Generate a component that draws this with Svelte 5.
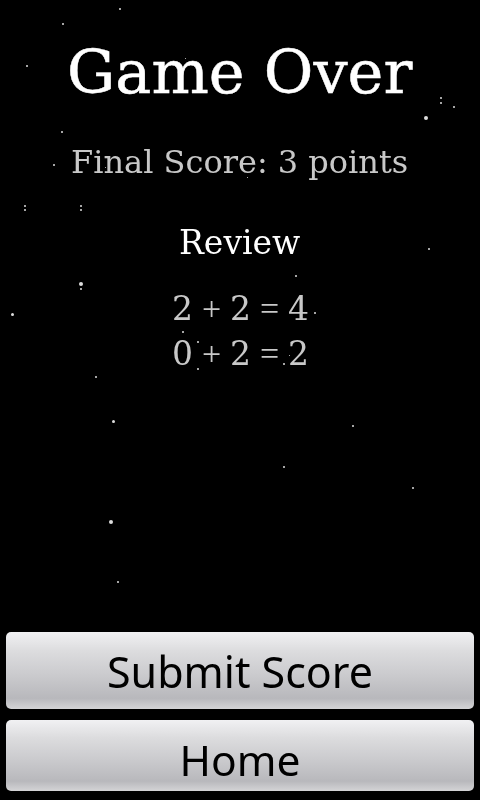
<script lang="ts">
    // x, y, size (px)
    const stars = [
        [120, 9, 2], [63, 24, 2], [27, 66, 2], [185, 58, 1], [62, 132, 2], [54, 165, 2],
        [105, 167, 1], [247, 177, 1], [380, 155, 1], [441, 98, 2], [441, 103, 2], [454, 107, 2],
        [426, 118, 4], [25, 206, 2], [25, 210, 2], [81, 206, 2], [81, 210, 2], [81, 284, 4],
        [81, 289, 2], [12, 314, 3], [96, 377, 2], [183, 332, 2], [198, 342, 2], [198, 369, 2],
        [429, 249, 2], [296, 276, 2], [315, 313, 2], [289, 355, 1], [284, 364, 2], [113, 421, 3],
        [353, 426, 2], [284, 467, 2], [413, 488, 2], [111, 522, 4], [118, 582, 2]
    ];
    const review = ["2 + 2 = 4", "0 + 2 = 2"];
</script>

<main>
    <div class="sky">
        {#each stars as [x, y, size]}
            <i style="left:{x - size / 2}px;top:{y - size / 2}px;width:{size}px;height:{size}px"></i>
        {/each}
    </div>

    <h1>Game Over</h1>
    <p class="score">Final Score: 3 points</p>
    <h2>Review</h2>
    <div class="review">
        {#each review as line}
            <div class="sum">
                {#each line.split(" ") as token}
                    <span class:op={token === "+" || token === "="}>{token}</span>
                {/each}
            </div>
        {/each}
    </div>

    <div class="buttons">
        <button class="submit">Submit Score</button>
        <button class="home">Home</button>
    </div>
</main>

<style>
    :global(body) {
        background: #000;
    }
    main {
        position: relative;
        width: 480px;
        height: 800px;
        overflow: hidden;
        background: #000;
        display: flex;
        flex-direction: column;
        align-items: center;
        font-family: "DejaVu Serif", serif;
    }
    .sky {
        position: absolute;
        inset: 0;
    }
    .sky i {
        position: absolute;
        border-radius: 50%;
        background: #ddd;
    }
    h1,
    h2,
    p {
        position: relative;
        margin: 0;
        font-weight: normal;
        will-change: transform;
    }
    h1 {
        margin-top: 32px;
        font-size: 60.5px;
        line-height: 80px;
        color: #fff;
        -webkit-text-stroke: 0.5px #fff;
    }
    .score {
        margin-top: 30px;
        font-size: 32px;
        line-height: 40px;
        color: #c8c8c8;
    }
    h2 {
        margin-top: 41px;
        font-size: 33px;
        line-height: 40px;
        color: #fff;
    }
    .review {
        position: relative;
        margin-top: 23px;
        font-size: 33px;
        line-height: 45px;
        color: #c8c8c8;
        will-change: transform;
    }
    .sum {
        display: grid;
        grid-template-columns: repeat(5, 29px);
        text-align: center;
    }
    .op {
        font-family: "Liberation Serif", serif;
        font-size: 34px;
    }
    .buttons {
        position: relative;
        margin-top: auto;
        margin-bottom: 9px;
        width: 468px;
        display: flex;
        flex-direction: column;
        gap: 11px;
        will-change: transform;
    }
    button {
        width: 100%;
        padding: 0;
        border: 0;
        border-radius: 5px;
        background: linear-gradient(#f1f1f3 0%, #dcdcde 25%, #cbcbce 55%, #b8b8bc 86%, #d4d4d6 100%);
        color: #000;
        font-family: "Noto Sans", sans-serif;
        font-size: 43px;
    }
    .submit {
        height: 77px;
        padding-top: 2px;
    }
    .home {
        height: 71px;
        padding-top: 7px;
        font-size: 42.5px;
    }
</style>
